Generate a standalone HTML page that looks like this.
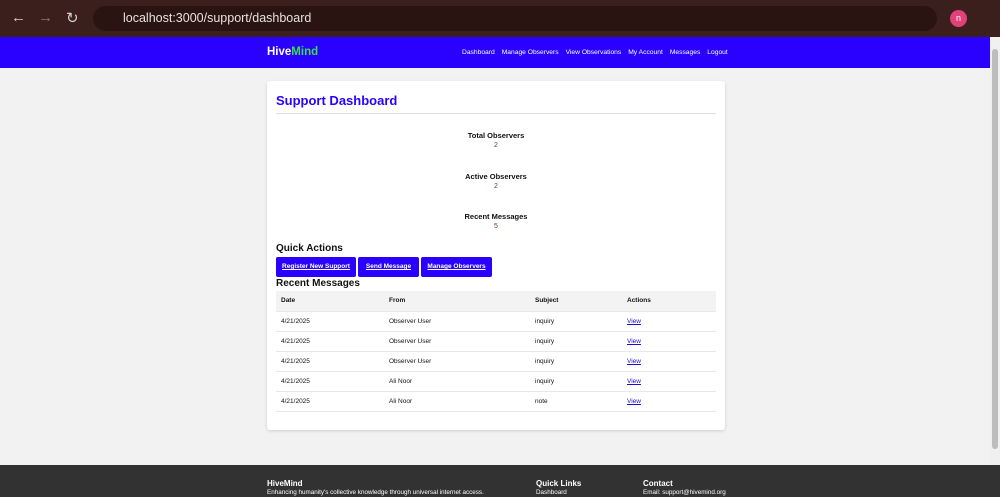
<!DOCTYPE html>
<html><head><style>
*{margin:0;padding:0;box-sizing:border-box}
body{width:1000px;height:497px;overflow:hidden;font-family:"Liberation Sans",sans-serif;background:#f2f2f2;position:relative}
.chrome{position:absolute;left:0;top:0;width:1000px;height:37px;background:#3a1f1c}
.url{position:absolute;left:93px;top:6px;width:844px;height:25px;border-radius:13px;background:#2a1412;color:#e8e0de;font-size:12.5px;line-height:25px;padding-left:30px}
.ic{position:absolute;color:#d8cfcc;font-size:15px;top:9px}
.nav{position:absolute;top:37px;left:0;width:990px;height:31px;background:#2a00ff}
.logo{position:absolute;left:267px;top:9px;font-weight:bold;font-size:11.5px;color:#fff}
.logo span{color:#38e04a}
.links{position:absolute;left:462px;top:12px;font-size:6.7px;color:#fff}
.links span{margin-right:7px}
.sb{position:absolute;right:0;top:37px;width:10px;height:428px;background:#f0f0f0}
.sb div{position:absolute;left:2px;top:12px;width:6px;height:400px;background:#bdbdbd;border-radius:3px}
.card{position:absolute;left:267px;top:81px;width:458px;height:349px;background:#fff;box-shadow:0 1px 3px rgba(0,0,0,.15);border-radius:3px}
h1{position:absolute;left:9px;top:12px;font-size:13px;color:#2a00ff}
.hr{position:absolute;left:9px;top:32px;width:440px;height:1px;background:#ddd}
.stat{position:absolute;left:0;width:458px;text-align:center;font-size:7.5px}
.stat b{display:block;color:#111}
.stat i{font-style:normal;color:#6a3b20;font-size:7px}
h2{position:absolute;left:9px;font-size:10px;color:#111}
.btn{position:absolute;top:176px;height:20px;background:#2a00ff;color:#fff;font-size:6.5px;font-weight:bold;text-decoration:underline;text-align:center;line-height:20px;border-radius:2px}
table{position:absolute;left:9px;top:210px;width:440px;border-collapse:collapse;font-size:6.5px;color:#111}
td,th{text-align:left;height:20px;padding-left:5px;border-bottom:1px solid #e8e8e8;font-weight:normal}
th{background:#f3f3f3;font-weight:bold}
a{color:#1a0dcc;text-decoration:underline}
.foot{position:absolute;left:0;top:465px;width:1000px;height:32px;background:#323232;color:#fff;font-size:7px}
.foot b{position:absolute;top:14px;font-size:8px}
.foot span{position:absolute;top:24px;font-size:6.3px}
</style></head><body>
<div class="chrome">
<span class="ic" style="left:11px">←</span><span class="ic" style="left:38px;color:#8a7572">→</span><span class="ic" style="left:66px">↻</span>
<div class="url">localhost:3000/support/dashboard</div>
<span style="position:absolute;left:950px;top:10px;width:17px;height:17px;border-radius:50%;background:#e0417a;color:#fff;font-size:9px;text-align:center;line-height:17px">n</span>
</div>
<div class="nav"><div class="logo">Hive<span>Mind</span></div>
<div class="links"><span>Dashboard</span><span>Manage Observers</span><span>View Observations</span><span>My Account</span><span>Messages</span><span>Logout</span></div></div>
<div class="sb"><div></div></div>
<div class="card">
<h1>Support Dashboard</h1><div class="hr"></div>
<div class="stat" style="top:50px"><b>Total Observers</b><i>2</i></div>
<div class="stat" style="top:91px"><b>Active Observers</b><i>2</i></div>
<div class="stat" style="top:131px"><b>Recent Messages</b><i>5</i></div>
<h2 style="top:162px">Quick Actions</h2>
<div class="btn" style="left:9px;width:80px">Register New Support</div>
<div class="btn" style="left:91px;width:61px">Send Message</div>
<div class="btn" style="left:154px;width:71px">Manage Observers</div>
<h2 style="top:197px">Recent Messages</h2>
<table>
<tr><th style="width:108px">Date</th><th style="width:146px">From</th><th style="width:92px">Subject</th><th>Actions</th></tr>
<tr><td>4/21/2025</td><td>Observer User</td><td>inquiry</td><td><a>View</a></td></tr>
<tr><td>4/21/2025</td><td>Observer User</td><td>inquiry</td><td><a>View</a></td></tr>
<tr><td>4/21/2025</td><td>Observer User</td><td>inquiry</td><td><a>View</a></td></tr>
<tr><td>4/21/2025</td><td>Ali Noor</td><td>inquiry</td><td><a>View</a></td></tr>
<tr><td>4/21/2025</td><td>Ali Noor</td><td>note</td><td><a>View</a></td></tr>
</table>
</div>
<div class="foot">
<b style="left:267px">HiveMind</b><span style="left:267px">Enhancing humanity's collective knowledge through universal internet access.</span>
<b style="left:536px">Quick Links</b><span style="left:536px">Dashboard</span>
<b style="left:643px">Contact</b><span style="left:643px">Email: support@hivemind.org</span>
</div>
</body></html>
